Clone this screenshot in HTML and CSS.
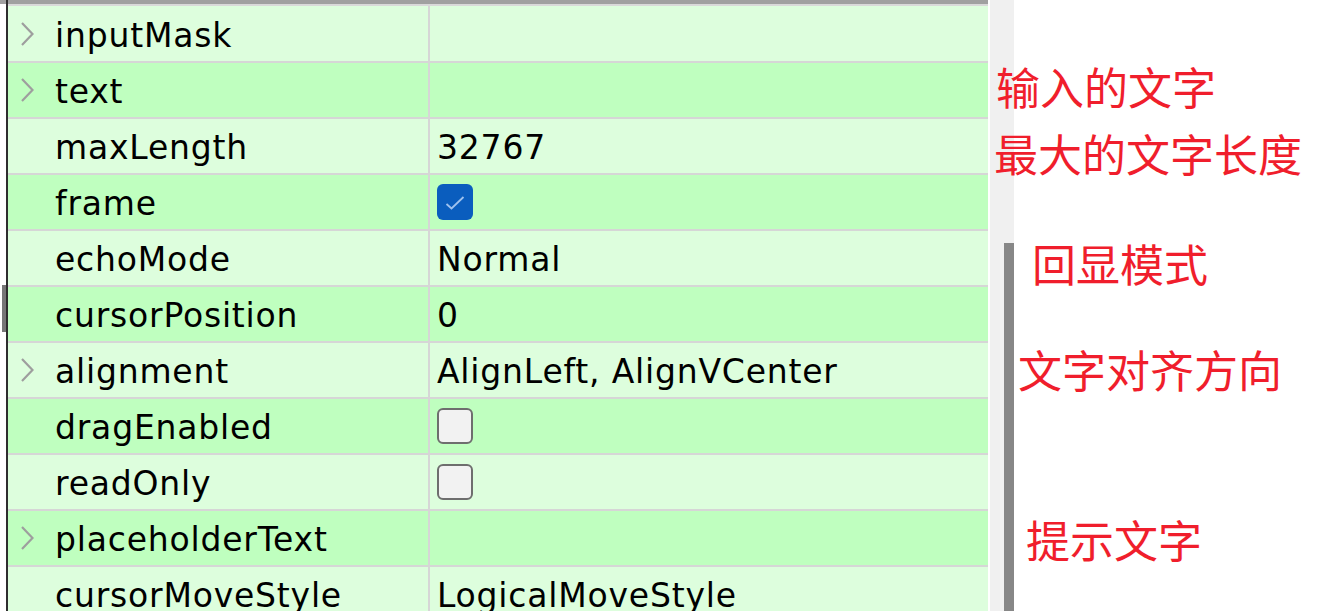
FILE: index.html
```html
<!DOCTYPE html>
<html lang="zh-CN">
<head>
<meta charset="utf-8">
<title>QLineEdit properties</title>
<link rel="stylesheet" href="styles.css">
</head>
<body>
<div class="screen">
  <div class="strip"><div class="strip-top"></div><div class="strip-mark"></div></div>
  <div class="panel">
    <div class="panel-head"></div>
    <div class="rows">
      <div class="row light first">
        <div class="name"><span class="exp"><svg viewBox="0 0 14 26" width="14" height="26"><path d="M2 2 L12.5 13 L2 24" fill="none" stroke="#9e9e9e" stroke-width="2.2"/></svg></span><span class="label">inputMask</span></div>
        <div class="value"></div>
      </div>
      <div class="row dark">
        <div class="name"><span class="exp"><svg viewBox="0 0 14 26" width="14" height="26"><path d="M2 2 L12.5 13 L2 24" fill="none" stroke="#9e9e9e" stroke-width="2.2"/></svg></span><span class="label">text</span></div>
        <div class="value"></div>
      </div>
      <div class="row light">
        <div class="name"><span class="exp"></span><span class="label">maxLength</span></div>
        <div class="value">32767</div>
      </div>
      <div class="row dark">
        <div class="name"><span class="exp"></span><span class="label">frame</span></div>
        <div class="value"><span class="check on"><svg viewBox="0 0 36 36" width="36" height="36"><path d="M9.5 20 L14.5 24.5 L26.5 13" fill="none" stroke="#9fc2ee" stroke-width="1.8"/></svg></span></div>
      </div>
      <div class="row light">
        <div class="name"><span class="exp"></span><span class="label">echoMode</span></div>
        <div class="value">Normal</div>
      </div>
      <div class="row dark">
        <div class="name"><span class="exp"></span><span class="label">cursorPosition</span></div>
        <div class="value">0</div>
      </div>
      <div class="row light">
        <div class="name"><span class="exp"><svg viewBox="0 0 14 26" width="14" height="26"><path d="M2 2 L12.5 13 L2 24" fill="none" stroke="#9e9e9e" stroke-width="2.2"/></svg></span><span class="label">alignment</span></div>
        <div class="value">AlignLeft, AlignVCenter</div>
      </div>
      <div class="row dark">
        <div class="name"><span class="exp"></span><span class="label">dragEnabled</span></div>
        <div class="value"><span class="check"></span></div>
      </div>
      <div class="row light">
        <div class="name"><span class="exp"></span><span class="label">readOnly</span></div>
        <div class="value"><span class="check"></span></div>
      </div>
      <div class="row dark">
        <div class="name"><span class="exp"><svg viewBox="0 0 14 26" width="14" height="26"><path d="M2 2 L12.5 13 L2 24" fill="none" stroke="#9e9e9e" stroke-width="2.2"/></svg></span><span class="label">placeholderText</span></div>
        <div class="value"></div>
      </div>
      <div class="row light">
        <div class="name"><span class="exp"></span><span class="label">cursorMoveStyle</span></div>
        <div class="value">LogicalMoveStyle</div>
      </div>
    </div>
  </div>
  <div class="gap"></div>
  <div class="scrollbar"><div class="thumb"></div></div>
  <div class="notes">
    <span class="note n1">输入的文字</span>
    <span class="note n2">最大的文字长度</span>
    <span class="note n3">回显模式</span>
    <span class="note n4">文字对齐方向</span>
    <span class="note n5">提示文字</span>
  </div>
</div>
</body>
</html>
```

FILE: styles.css
```css
html, body {
  margin: 0;
  padding: 0;
  background: #ffffff;
  overflow: hidden;
}
.screen {
  position: relative;
  display: flex;
  width: 1335px;
  height: 611px;
  overflow: hidden;
  font-family: "DejaVu Sans", "Noto Sans", sans-serif;
}
.strip {
  width: 6px;
  flex: none;
  display: flex;
  flex-direction: column;
}
.strip-top {
  height: 4px;
  flex: none;
  background: #a0a0a0;
}
.strip-mark {
  flex: none;
  margin-top: 281px;
  margin-left: 2px;
  width: 4px;
  height: 47px;
  background: #767676;
}
.panel {
  width: 980px;
  flex: none;
  border-left: 2px solid #2e2e2e;
  display: flex;
  flex-direction: column;
}
.panel-head {
  height: 4px;
  flex: none;
  background: #a0a0a0;
  border-bottom: 2px solid #d9d9d9;
}
.rows {
  flex: none;
  display: flex;
  flex-direction: column;
}
.row {
  display: flex;
  height: 54px;
  border-bottom: 2px solid #d6d6d6;
  flex: none;
}
.row.first {
  height: 55px;
}
.light { background: #ddfedd; }
.dark { background: #bfffbf; }
.name {
  width: 420px;
  flex: none;
  border-right: 2px solid #d6d6d6;
  display: flex;
  align-items: center;
}
.exp {
  width: 47px;
  flex: none;
  display: flex;
  align-items: center;
  padding-left: 12px;
  box-sizing: border-box;
  height: 26px;
}
.label, .value {
  font-size: 33px;
  letter-spacing: 0.8px;
  color: #000000;
  white-space: nowrap;
}
.label {
  padding-top: 3px;
}
.value {
  flex: 1;
  padding-left: 7px;
  padding-top: 3px;
  display: flex;
  align-items: center;
}
.check {
  width: 36px;
  height: 36px;
  margin-top: -3px;
  box-sizing: border-box;
  border: 2px solid #6e6e6e;
  border-radius: 6px;
  background: #f2f2f2;
  display: block;
}
.check.on {
  border: none;
  background: #0a5dbe;
}
.check svg { display: block; }
.gap {
  width: 2px;
  flex: none;
}
.scrollbar {
  width: 24px;
  flex: none;
  background: #f0f0f0;
  display: flex;
  flex-direction: column;
  align-items: flex-end;
}
.thumb {
  margin-top: 243px;
  width: 10px;
  flex: 1;
  background: #878787;
}
.notes {
  flex: 1;
}
.note {
  position: absolute;
  font-family: "Noto Sans CJK SC", sans-serif;
  font-size: 44px;
  line-height: 44px;
  color: #f01e2c;
  white-space: nowrap;
}
.n1 { left: 996px; top: 64px; }
.n2 { left: 994px; top: 131px; }
.n3 { left: 1032px; top: 241px; }
.n4 { left: 1018px; top: 347px; }
.n5 { left: 1026px; top: 517px; }
```
